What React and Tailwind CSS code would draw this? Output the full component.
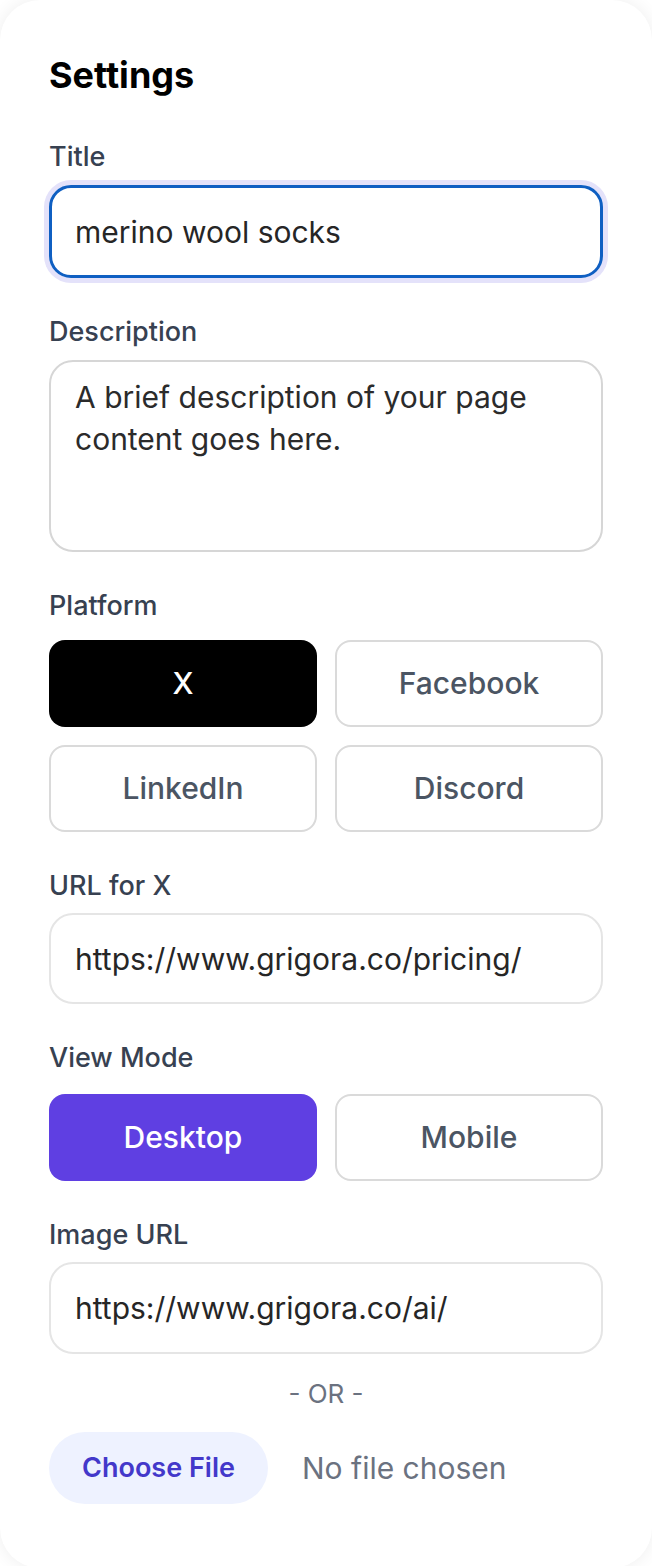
import React, { useState } from "react";

function Label({ children }) {
  return <label className="block text-[27px] leading-[36px] font-medium text-[#374151]">{children}</label>;
}

function Toggle({ active, activeClass, children, onClick }) {
  return (
    <button
      onClick={onClick}
      className={
        "h-[87px] rounded-[16px] text-[30px] font-medium " +
        (active ? activeClass : "bg-white border-2 border-[#dadada] text-[#4b5563]")
      }
    >
      {children}
    </button>
  );
}

export default function App() {
  const [platform, setPlatform] = useState("X");
  const [mode, setMode] = useState("Desktop");

  return (
    <div className="w-[652px] min-h-[1566px] bg-white" style={{ fontFamily: "Inter, 'Noto Sans', sans-serif" }}>
      <div className="min-h-[1566px] rounded-[40px] bg-white shadow-[0_0_18px_rgba(0,0,0,0.07)] px-[49px] pt-[52px] pb-[64px]">
        <h2 className="text-[36px] leading-[46px] font-bold text-black mb-[41px]">Settings</h2>

        <div className="flex flex-col gap-[36px]">
          <div>
            <Label>Title</Label>
            <div className="mt-[10px]">
              <input
                defaultValue="merino wool socks"
                className="w-full h-[93px] rounded-[22px] border-[3px] border-[#0f5fc2] ring-[5px] ring-[#e4e2fa] px-[23px] text-[30px] text-[#262626] outline-none"
              />
            </div>
          </div>

          <div>
            <Label>Description</Label>
            <textarea
              defaultValue="A brief description of your page content goes here."
              className="mt-[10px] block w-full h-[192px] resize-none rounded-[24px] border-2 border-[#d6d6d6] px-[24px] pt-[14px] text-[30px] leading-[42px] text-[#2b2b2b] outline-none"
            />
          </div>

          <div>
            <Label>Platform</Label>
            <div className="mt-[16px] grid grid-cols-2 gap-x-[18px] gap-y-[18px]">
              {["X", "Facebook", "LinkedIn", "Discord"].map((p) => (
                <Toggle key={p} active={platform === p} activeClass="bg-black text-white" onClick={() => setPlatform(p)}>
                  {p}
                </Toggle>
              ))}
            </div>
          </div>

          <div>
            <Label>URL for {platform}</Label>
            <input
              defaultValue="https://www.grigora.co/pricing/"
              className="mt-[9px] block w-full h-[91px] rounded-[24px] border-2 border-[#e5e5e5] px-[24px] text-[30px] text-[#262626] outline-none"
            />
          </div>

          <div>
            <Label>View Mode</Label>
            <div className="mt-[18px] grid grid-cols-2 gap-x-[18px]">
              {["Desktop", "Mobile"].map((m) => (
                <Toggle key={m} active={mode === m} activeClass="bg-[#5f3fe2] text-white" onClick={() => setMode(m)}>
                  {m}
                </Toggle>
              ))}
            </div>
          </div>

          <div>
            <Label>Image URL</Label>
            <input
              defaultValue="https://www.grigora.co/ai/"
              className="mt-[9px] block w-full h-[92px] rounded-[24px] border-2 border-[#e5e5e5] px-[24px] text-[30px] text-[#262626] outline-none"
            />
            <p className="mt-[22px] text-center text-[26px] leading-[36px] text-[#6b7280]">- OR -</p>
            <div className="mt-[20px] flex items-center gap-[34px]">
              <button className="h-[72px] w-[219px] rounded-full bg-[#eef2ff] text-[27px] font-semibold text-[#4338ca]">
                Choose File
              </button>
              <span className="text-[30px] text-[#6b7280]">No file chosen</span>
            </div>
          </div>
        </div>
      </div>
    </div>
  );
}
